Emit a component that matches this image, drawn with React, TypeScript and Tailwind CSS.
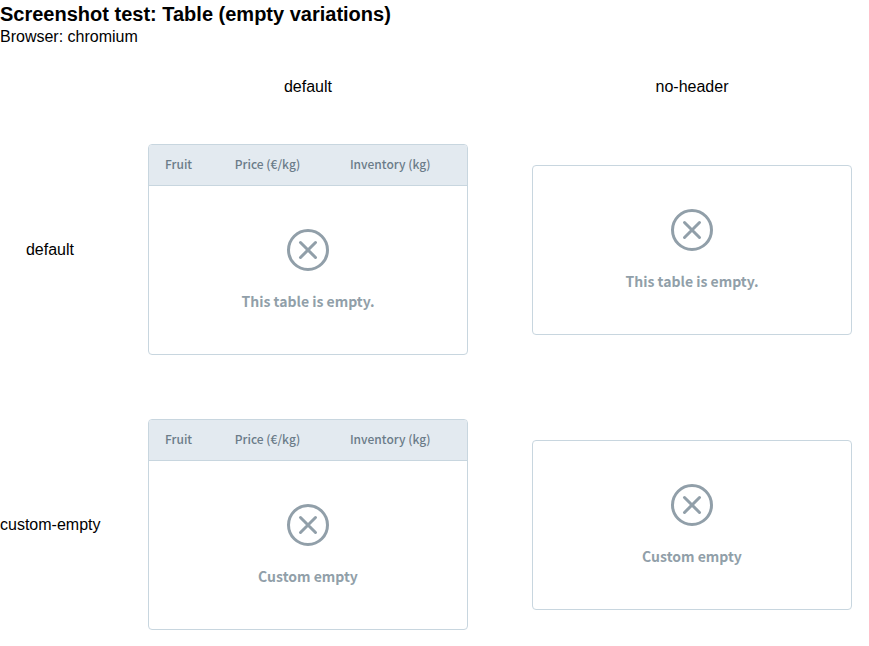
const columns = ["Fruit", "Price (€/kg)", "Inventory (kg)"];

const variations = ["default", "no-header"];

const rows = [
  { name: "default", message: "This table is empty." },
  { name: "custom-empty", message: "Custom empty" },
];

function EmptyIcon() {
  return (
    <svg className="size-12" viewBox="0 0 48 48" fill="none" stroke="currentColor" strokeWidth="3" aria-hidden="true">
      <circle cx="24" cy="24" r="19.5" />
      <path d="M16.5 16.5l15 15M31.5 16.5l-15 15" strokeLinecap="round" />
    </svg>
  );
}

function EmptyTable({ message, header }: { message: string; header: boolean }) {
  return (
    <div className="w-full overflow-hidden rounded border border-[#c8d6df] font-['Noto_Sans_CJK_SC','Noto_Sans',sans-serif]">
      <table className="w-full border-separate border-spacing-0">
        {header && (
          <thead className="bg-[#e3eaf0]">
            <tr>
              {columns.map((column) => (
                <th key={column} scope="col" className="h-[41px] whitespace-nowrap border-b border-[#c8d6df] px-4 pb-0.5 text-left text-[12px] leading-5 font-medium text-[#6b7c89]">
                  {column}
                </th>
              ))}
            </tr>
          </thead>
        )}
        <tbody>
          <tr>
            <td colSpan={columns.length} className="pt-10 pb-[42px] text-[#919fa9]">
              <div className="flex flex-col items-center gap-4">
                <EmptyIcon />
                <p className="text-[14px] leading-[22px] font-bold">{message}</p>
              </div>
            </td>
          </tr>
        </tbody>
      </table>
    </div>
  );
}

export default function App() {
  return (
    <main className="bg-white font-['Liberation_Sans',Arial,sans-serif] text-base text-black">
      <h1 className="text-xl leading-7 font-bold">Screenshot test: Table (empty variations)</h1>
      <p className="leading-[18px]">Browser: chromium</p>
      <div className="mt-[30px] grid grid-cols-[100px_minmax(0,1fr)_minmax(0,1fr)] items-center gap-x-12 gap-y-16 pr-px pb-4">
        <div className="col-span-3 -mb-[18px] grid grid-cols-subgrid">
          {variations.map((variation) => (
            <h2 key={variation} className="pr-4 text-center leading-[22px] first:col-start-2">
              {variation}
            </h2>
          ))}
        </div>
        {rows.map((row) => (
          <section key={row.name} className="col-span-3 grid grid-cols-subgrid items-center">
            <h2 className="text-center whitespace-nowrap">{row.name}</h2>
            {variations.map((variation) => (
              <div key={variation} className="pr-4">
                <EmptyTable message={row.message} header={variation === "default"} />
              </div>
            ))}
          </section>
        ))}
      </div>
    </main>
  );
}
